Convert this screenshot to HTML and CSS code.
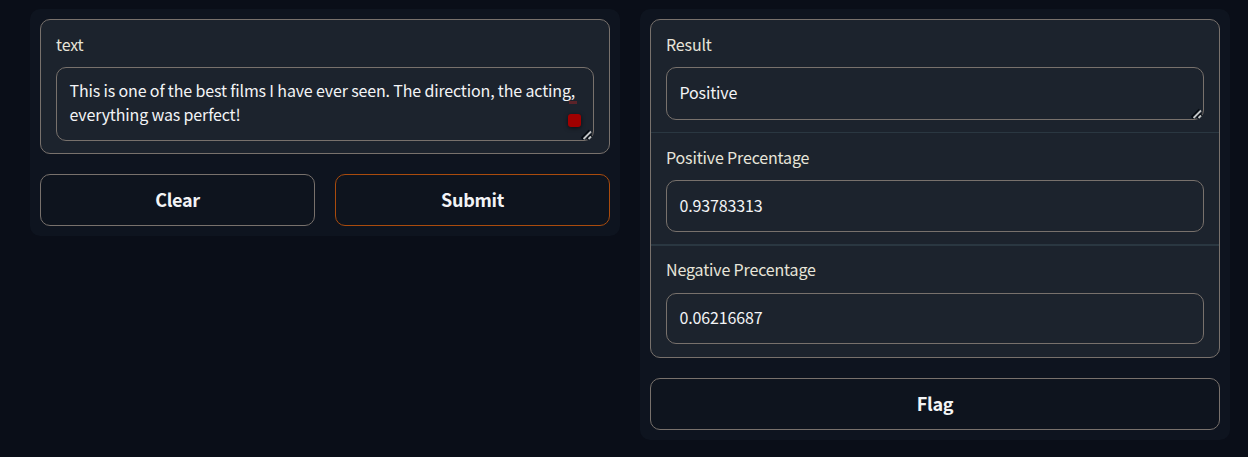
FILE: index.html
```html
<!DOCTYPE html>
<html lang="en">
<head>
<meta charset="utf-8">
<title>Sentiment analysis</title>
<link rel="stylesheet" href="styles.css">
</head>
<body>
<main class="layout">
  <section class="panel">
    <div class="form">
      <div class="block">
        <div class="label">text</div>
        <div class="field area">This is one of the best films I have ever seen. The direction, the acting,<br>everything was perfect!
          <span class="marker"></span>
          <svg class="grip" width="12" height="12" viewBox="0 0 12 12"><path d="M1 11 9 3M6 11 10 7" stroke="#050b12" stroke-width="3.500"/><path d="M2.500 11 10 3.500M7.500 11 10 8.500" stroke="#c0c3c5" stroke-width="1.800"/></svg>
        </div>
      </div>
    </div>
    <div class="actions">
      <button class="button">Clear</button>
      <button class="button primary">Submit</button>
    </div>
  </section>
  <section class="panel">
    <div class="form">
      <div class="block">
        <div class="label">Result</div>
        <div class="field">Positive
          <svg class="grip" width="12" height="12" viewBox="0 0 12 12"><path d="M1 11 9 3M6 11 10 7" stroke="#050b12" stroke-width="3.500"/><path d="M2.500 11 10 3.500M7.500 11 10 8.500" stroke="#c0c3c5" stroke-width="1.800"/></svg>
        </div>
      </div>
      <div class="block positive">
        <div class="label">Positive Precentage</div>
        <div class="field">0.93783313</div>
      </div>
      <div class="block negative">
        <div class="label">Negative Precentage</div>
        <div class="field">0.06216687</div>
      </div>
    </div>
    <div class="actions">
      <button class="button">Flag</button>
    </div>
  </section>
</main>
</body>
</html>
```
FILE: styles.css
```css
* { box-sizing: border-box; }
body {
  margin: 0;
  height: 457px;
  overflow: hidden;
  background: #0a0e18;
  color: #f3f4f6;
  font: 500 16px/24px "Noto Sans CJK SC", "Open Sans", sans-serif;
  letter-spacing: -.15px;
}
.layout {
  display: grid;
  grid-template-columns: 590px 590px;
  gap: 20px;
  align-items: start;
  padding: 9px 0 0 30px;
}
.panel {
  display: flex;
  flex-direction: column;
  gap: 20px;
  padding: 10px;
  border-radius: 10px;
  background: #0e141f;
}
.form {
  overflow: hidden;
  border: 1px solid #78716c;
  border-radius: 10px;
  background: #1c232d;
}
.block { padding: 12px 15px 12px; }
.label {
  height: 24px;
  margin-bottom: 11px;
  color: #e7e5da;
  font-weight: 400;
}
.field {
  position: relative;
  height: 53px;
  padding: 12px 12.5px;
  border: 1px solid #78716c;
  border-radius: 10px;
  font-weight: 400;
  white-space: nowrap;
}
.area { height: 74px; padding-top: 10px; }
.positive { border-top: 1px solid #2a3741; }
.positive .field { height: 52px; }
.negative {
  border-top: 2px solid #2a3741;
  padding-top: 11px;
  padding-bottom: 13px;
}
.negative .label { margin-bottom: 12px; }
.negative .field { height: 51px; padding-top: 11px; }
.marker {
  position: absolute;
  right: 12px;
  bottom: 13px;
  width: 13px;
  height: 13px;
  border-radius: 3px;
  background: #a00000;
  box-shadow: 0 1px 4px rgba(0, 0, 0, .6);
}
.marker::before {
  content: "";
  position: absolute;
  left: 1px;
  top: -13px;
  width: 8px;
  height: 3px;
  background: #5b2329;
}
.grip {
  position: absolute;
  right: 0;
  bottom: 0;
  fill: none;
}
.actions { display: flex; gap: 20px; }
.button {
  flex: 1;
  height: 52px;
  padding: 0 0 2px;
  border: 1px solid #78716c;
  border-radius: 10px;
  background: #0e141e;
  color: #f3f4f6;
  font: 700 18px/28px "Noto Sans CJK SC", "Open Sans", sans-serif;
  letter-spacing: -.3px;
}
.primary { border-color: #a94b0d; }
```
